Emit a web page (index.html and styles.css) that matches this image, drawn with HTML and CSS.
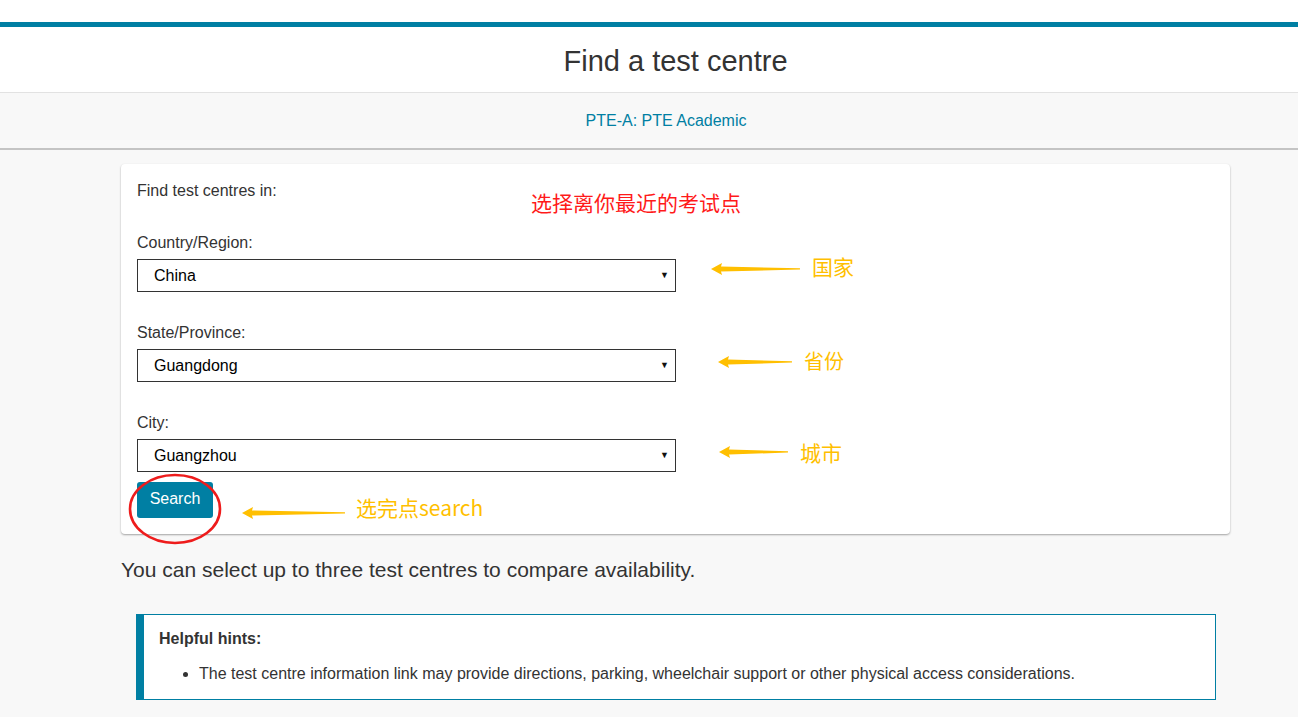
FILE: index.html
```html
<!DOCTYPE html>
<html lang="en">
<head>
<meta charset="utf-8">
<title>Find a test centre</title>
<link rel="stylesheet" href="styles.css">
</head>
<body>
<div class="page">
  <div class="topgap"></div>
  <div class="brandbar"></div>
  <header class="header"><h1 class="title">Find a test centre</h1></header>
  <div class="subheader"><a class="product" href="#">PTE-A: PTE Academic</a></div>
  <main class="container">
    <section class="card">
      <p class="intro">Find test centres in:</p>
      <label class="field-label">Country/Region:</label>
      <span class="select-wrap"><select class="select"><option>China</option></select></span>
      <label class="field-label">State/Province:</label>
      <span class="select-wrap"><select class="select"><option>Guangdong</option></select></span>
      <label class="field-label">City:</label>
      <span class="select-wrap"><select class="select"><option>Guangzhou</option></select></span>
      <button class="btn">Search</button>

      <div class="note note-red">选择离你最近的考试点</div>
      <svg class="ann-arrow arrow1" width="90" height="12" viewBox="0 0 90 12"><polygon points="0,6 11,0 10,3.5 89,5.2 89,6.6 10,8.5 11,12" fill="#ffbf00"/></svg>
      <div class="note note-y n1">国家</div>
      <svg class="ann-arrow arrow2" width="75" height="12" viewBox="0 0 75 12"><polygon points="0,6 11,0 10,3.5 74,5.2 74,6.6 10,8.5 11,12" fill="#ffbf00"/></svg>
      <div class="note note-y n2">省份</div>
      <svg class="ann-arrow arrow3" width="70" height="12" viewBox="0 0 70 12"><polygon points="0,6 11,0 10,3.5 69,5.2 69,6.6 10,8.5 11,12" fill="#ffbf00"/></svg>
      <div class="note note-y n3">城市</div>
      <svg class="ann-arrow arrow4" width="104" height="12" viewBox="0 0 104 12"><polygon points="0,6 11,0 10,3.5 103,5.2 103,6.6 10,8.5 11,12" fill="#ffbf00"/></svg>
      <div class="note note-y n4">选完点search</div>
      <svg class="ring" width="96" height="74" viewBox="0 0 96 74"><ellipse cx="48" cy="37" rx="45" ry="34" fill="none" stroke="#ee1c1c" stroke-width="2.6"/></svg>
    </section>

    <p class="compare">You can select up to three test centres to compare availability.</p>

    <div class="hints">
      <p class="hints-title">Helpful hints:</p>
      <ul class="hints-list">
        <li>The test centre information link may provide directions, parking, wheelchair support or other physical access considerations.</li>
      </ul>
    </div>
  </main>
</div>
</body>
</html>
```

FILE: styles.css
```css
html, body {
  margin: 0;
  padding: 0;
  overflow: hidden;
  background: #f8f8f8;
}
.page {
  width: 1351px;
  font-family: "Liberation Sans", Arial, sans-serif;
  color: #333;
}
.topgap {
  height: 22px;
  background: #fff;
}
.brandbar {
  height: 5px;
  background: #007fa3;
}
.header {
  height: 65px;
  background: #fff;
  border-bottom: 1px solid #e2e2e2;
  display: flex;
  align-items: center;
  justify-content: center;
}
.title {
  margin: 0;
  font-size: 29px;
  font-weight: normal;
  color: #333;
  line-height: 34px;
  padding-top: 2px;
}
.subheader {
  height: 55px;
  background: #f8f8f8;
  border-bottom: 2px solid #c4c4c4;
  display: flex;
  align-items: center;
  justify-content: center;
  padding-right: 19px;
}
.product {
  color: #007fa3;
  text-decoration: none;
  font-size: 16px;
  padding-top: 1px;
}
.container {
  width: 1109px;
  margin: 0 auto;
  padding-top: 14px;
}
.card {
  position: relative;
  background: #fff;
  border-radius: 4px;
  box-shadow: 0 1px 2px rgba(0,0,0,0.35);
  padding: 16px 16px 16px 16px;
  display: flex;
  flex-direction: column;
  align-items: flex-start;
}
.intro {
  margin: 0;
  padding-top: 1px;
  font-size: 16px;
  line-height: 20px;
}
.field-label {
  display: block;
  font-size: 16px;
  line-height: 20px;
  padding-top: 1px;
  margin-top: 31px;
  margin-bottom: 6px;
}
.card .field-label ~ .field-label {
  margin-top: 30px;
}
.select-wrap {
  position: relative;
  display: block;
  width: 539px;
}
.select-wrap::after {
  content: "\25BC";
  position: absolute;
  right: 7px;
  top: 11px;
  font-size: 9px;
  color: #111;
  pointer-events: none;
}
.select {
  appearance: none;
  -webkit-appearance: none;
  display: block;
  width: 539px;
  height: 33px;
  border: 1px solid #333;
  border-radius: 0;
  background: #fff;
  padding: 0 0 0 16px;
  font-family: "Liberation Sans", Arial, sans-serif;
  font-size: 16px;
  color: #000;
  margin: 0;
}
.btn {
  margin-top: 10px;
  height: 36px;
  width: 76px;
  border: none;
  border-radius: 3px;
  background: #007fa3;
  color: #fff;
  font-family: "Liberation Sans", Arial, sans-serif;
  font-size: 16px;
  padding: 0 0 2px 0;
}
.note {
  position: absolute;
  font-family: "Noto Sans CJK SC", sans-serif;
  line-height: 1;
  white-space: nowrap;
}
.note-red {
  color: #ff1a1a;
  font-size: 21px;
  left: 410px;
  top: 28px;
}
.note-y {
  color: #ffbf00;
  font-size: 20px;
}
.n1 { left: 691px; top: 92px; font-size: 21px; }
.n2 { left: 683px; top: 187px; }
.n3 { left: 679px; top: 278px; font-size: 21px; }
.n4 { left: 235px; top: 333px; font-size: 21px; }
.ann-arrow {
  position: absolute;
}
.arrow1 { left: 590px; top: 99px; }
.arrow2 { left: 597px; top: 192px; }
.arrow3 { left: 598px; top: 282px; }
.arrow4 { left: 121px; top: 343px; }
.ring {
  position: absolute;
  left: 6px;
  top: 308px;
}
.compare {
  margin: 24px 0 0 0;
  font-size: 21px;
  line-height: 24px;
  color: #333;
}
.hints {
  margin: 32px 14px 0 15px;
  background: #fff;
  border: 1px solid #007fa3;
  border-left: 8px solid #007fa3;
  padding: 14px 15px 15px 15px;
}
.hints-title {
  margin: 0;
  font-size: 16px;
  font-weight: bold;
  line-height: 20px;
}
.hints-list {
  margin: 15px 0 0 0;
  padding-left: 40px;
  font-size: 16px;
  line-height: 20px;
}
```
